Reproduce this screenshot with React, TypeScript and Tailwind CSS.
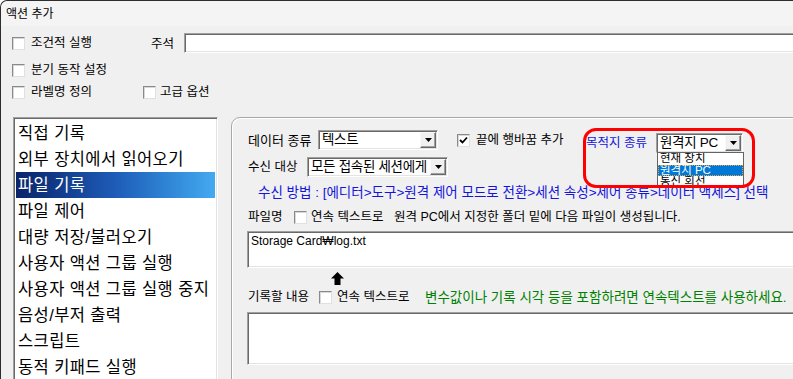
import React from 'react'

const sunken =
  'border border-t-[#a0a0a0] border-l-[#a0a0a0] border-b-white border-r-white shadow-[inset_1px_1px_0_#696969,inset_-1px_-1px_0_#e3e3e3]'

function Check({ checked }: { checked?: boolean }) {
  return (
    <span className="w-[13px] h-[13px] shrink-0 bg-white border border-t-[#8a8a8a] border-l-[#8a8a8a] border-b-[#e0e0e0] border-r-[#e0e0e0] shadow-[inset_1px_1px_0_#d8d8d8] flex items-center justify-center">
      {checked && (
        <svg width="9" height="9" viewBox="0 0 9 9">
          <path d="M1 4 L3.5 6.5 L8 1.5" fill="none" stroke="#000" strokeWidth="1.8" />
        </svg>
      )}
    </span>
  )
}

function Combo({ value, className }: { value: string; className: string }) {
  return (
    <div className={`h-[20px] bg-white flex items-center shrink-0 ${sunken} ${className}`}>
      <span className="flex-1 min-w-0 pl-[3px] text-[13.5px] leading-none text-black whitespace-nowrap overflow-hidden tracking-[-0.3px]">
        {value}
      </span>
      <span className="w-[16px] h-[16px] mr-[1px] shrink-0 bg-[#f0f0f0] border border-t-[#f8f8f8] border-l-[#f8f8f8] border-b-[#696969] border-r-[#696969] shadow-[inset_-1px_-1px_0_#a0a0a0] flex items-center justify-center">
        <svg width="7" height="4" viewBox="0 0 7 4">
          <path d="M0 0 H7 L3.5 4 Z" fill="#000" />
        </svg>
      </span>
    </div>
  )
}

const listItems = [
  '직접 기록',
  '외부 장치에서 읽어오기',
  '파일 기록',
  '파일 제어',
  '대량 저장/불러오기',
  '사용자 액션 그룹 실행',
  '사용자 액션 그룹 실행 중지',
  '음성/부저 출력',
  '스크립트',
  '동적 키패드 실행',
]

export default function App() {
  return (
    <div
      className="w-[793px] h-[379px] overflow-hidden bg-[#f0f0f0] border-t border-l border-[#2e2e2e] rounded-tl-[7px] text-black flex flex-col"
      style={{ fontFamily: '"Liberation Sans", "Noto Sans CJK KR", sans-serif' }}
    >
      {/* title bar */}
      <div className="h-[25px] shrink-0 bg-[#f4f4f4] flex items-center pl-[5px] text-[12px] leading-none rounded-tl-[7px]">
        액션 추가
      </div>

      {/* options */}
      <div className="flex items-start h-[20px] mt-[7px] shrink-0">
        <div className="flex items-center gap-[6px] pl-[11px] mt-[4px] w-[150px] shrink-0">
          <Check />
          <span className="text-[12.5px] leading-none">조건적 실행</span>
        </div>
        <span className="text-[12.5px] leading-none w-[33px] mt-[5px] shrink-0">주석</span>
        <div className={`w-[640px] h-[20px] bg-white shrink-0 ${sunken}`} />
      </div>
      <div className="flex items-center gap-[6px] pl-[11px] mt-[11px] h-[13px] shrink-0">
        <Check />
        <span className="text-[12.5px] leading-none">분기 동작 설정</span>
      </div>
      <div className="flex items-center pl-[11px] mt-[9px] h-[13px] shrink-0">
        <div className="flex items-center gap-[6px] w-[131px] shrink-0">
          <Check />
          <span className="text-[12.5px] leading-none">라벨명 정의</span>
        </div>
        <div className="flex items-center gap-[4px]">
          <Check />
          <span className="text-[12.5px] leading-none">고급 옵션</span>
        </div>
      </div>

      {/* body */}
      <div className="flex mt-[18px] pl-[12px] gap-[13px] flex-1 min-h-0">
        <div className={`w-[205px] h-[280px] bg-white p-[2px] shrink-0 ${sunken}`}>
          {listItems.map((item, i) => (
            <div
              key={item}
              className={`h-[26px] flex items-center pl-[2px] text-[16.5px] leading-none tracking-[0.4px] whitespace-nowrap ${
                i === 2 ? 'bg-gradient-to-r from-[#0a246a] via-[#1e5cb8] to-[#44aaf0] text-white' : 'text-black'
              }`}
            >
              {item}
            </div>
          ))}
        </div>

        <div className="relative w-[600px] h-[300px] shrink-0 border border-[#a8a8a8] rounded-tl-[9px] shadow-[inset_1px_1px_0_#ffffff] pl-[16px] pt-[12px]">
          {/* row A */}
          <div className="flex items-start h-[22px]">
            <span className="w-[70px] shrink-0 text-[13px] leading-none mt-[4px] whitespace-nowrap">데이터 종류</span>
            <Combo value="텍스트" className="w-[120px]" />
            <div className="flex items-center gap-[6px] ml-[19px] mt-[4px] w-[129px] shrink-0">
              <Check checked />
              <span className="text-[12.5px] leading-none whitespace-nowrap">끝에 행바꿈 추가</span>
            </div>
            <span className="w-[70px] shrink-0 text-[12.5px] leading-none mt-[7px] text-[#1414dc] whitespace-nowrap">
              목적지 종류
            </span>
            <Combo value="원격지 PC" className="w-[87px] mt-[3px]" />
          </div>

          {/* row B */}
          <div className="flex items-center h-[20px] mt-[5px]">
            <span className="w-[59px] shrink-0 text-[12.5px] leading-none whitespace-nowrap">수신 대상</span>
            <Combo value="모든 접속된 세션에게" className="w-[141px]" />
          </div>

          <div className="mt-[8px] pl-[10px] h-[16px] flex items-center text-[13.5px] leading-none text-[#1414dc] whitespace-nowrap">
            수신 방법 : [에디터&gt;도구&gt;원격 제어 모드로 전환&gt;세션 속성&gt;제어 종류&gt;데이터 액세스] 선택
          </div>

          {/* file name */}
          <div className="flex items-center h-[13px] mt-[10px]">
            <span className="w-[46px] shrink-0 text-[12.5px] leading-none">파일명</span>
            <Check />
            <span className="ml-[4px] w-[83px] shrink-0 text-[12.5px] leading-none whitespace-nowrap">연속 텍스트로</span>
            <span className="text-[12.5px] leading-none whitespace-nowrap">
              원격 PC에서 지정한 폴더 밑에 다음 파일이 생성됩니다.
            </span>
          </div>
          <div className={`w-[580px] h-[37px] mt-[7px] -ml-[1px] bg-white pl-[3px] pt-[2px] text-[12px] leading-[14px] ${sunken}`}>
            Storage Card₩log.txt
          </div>

          <div className="h-[13px] mt-[4px] pl-[83px]">
            <svg width="13" height="13" viewBox="0 0 13 13">
              <path d="M6.5 0 L13 6.5 H9.5 V13 H3.5 V6.5 H0 Z" fill="#000" />
            </svg>
          </div>

          {/* content */}
          <div className="flex items-center h-[13px] mt-[6px]">
            <span className="w-[71px] shrink-0 text-[12.5px] leading-none whitespace-nowrap">기록할 내용</span>
            <Check />
            <span className="ml-[5px] w-[88px] shrink-0 text-[12.5px] leading-none whitespace-nowrap">연속 텍스트로</span>
            <span className="text-[13.5px] leading-none whitespace-nowrap text-[#008000]">
              변수값이나 기록 시각 등을 포함하려면 연속텍스트를 사용하세요.
            </span>
          </div>
          <div className={`w-[580px] h-[53px] mt-[8px] -ml-[1px] bg-white ${sunken}`} />

          {/* open dropdown list */}
          <div className="absolute left-[425px] top-[34px] w-[87px] h-[36px] bg-white border border-[#646464] overflow-hidden text-[11.5px] leading-[11px]">
            <div className="h-[12px] pl-[2px] whitespace-nowrap overflow-hidden">현재 장치</div>
            <div className="h-[11px] pl-[2px] bg-[#0078d7] text-white outline-1 outline-dotted outline-[#f0a030] -outline-offset-1 whitespace-nowrap overflow-hidden">
              원격지 PC
            </div>
            <div className="h-[12px] pl-[2px] whitespace-nowrap overflow-hidden">통신 회선</div>
          </div>

          {/* annotation */}
          <div className="absolute left-[351px] top-[10px] w-[172px] h-[60px] border-[3px] border-[#ff0000] rounded-[13px] pointer-events-none" />
        </div>
      </div>
    </div>
  )
}
